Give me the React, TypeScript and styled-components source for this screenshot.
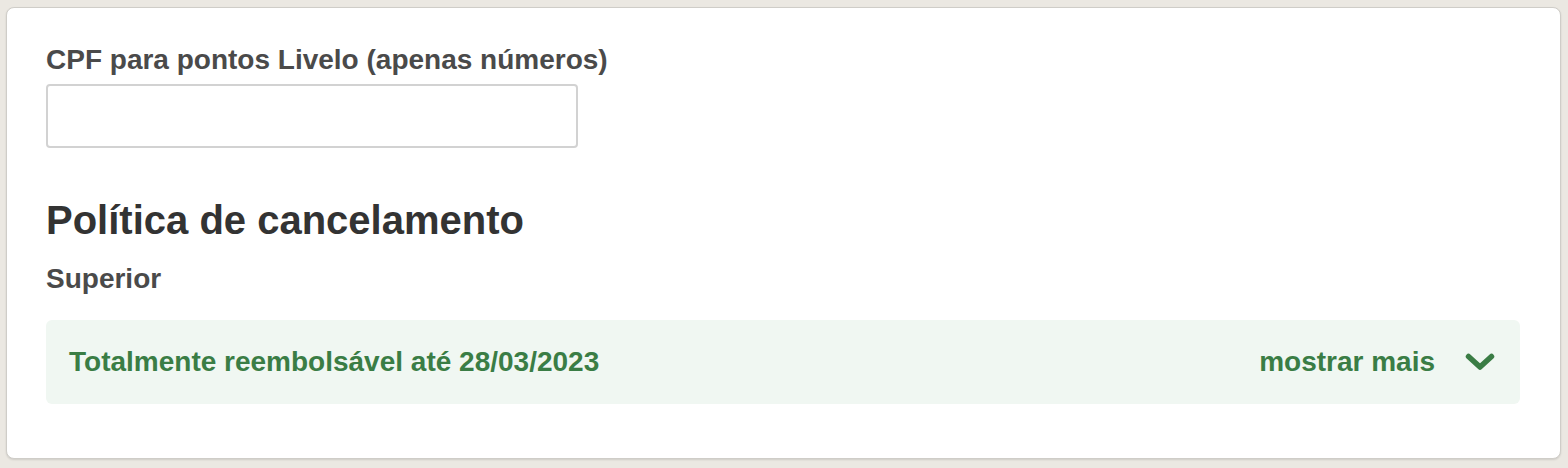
import styled, { createGlobalStyle } from "styled-components";

const GlobalStyle = createGlobalStyle`
  html, body {
    margin: 0;
    padding: 0;
    background: #ebe8e2;
    font-family: "Liberation Sans", Arial, Helvetica, sans-serif;
  }
  #root {
    padding: 7px 7px 9px 6px;
  }
`;

const Card = styled.section`
  background: #fff;
  border: 1px solid #cfcdc8;
  border-radius: 8px;
  box-shadow: 0 1px 2px rgba(0, 0, 0, 0.12);
  padding: 36px 40px 54px 39px;
`;

const Label = styled.label`
  display: block;
  font-size: 28px;
  font-weight: 700;
  color: #4a4a4a;
  line-height: 32px;
  margin-bottom: 8px;
`;

const TextInput = styled.input`
  display: block;
  box-sizing: border-box;
  width: 532px;
  height: 64px;
  border: 2px solid #d2d2d2;
  border-radius: 4px;
  background: #fff;
  font-size: 24px;
  padding: 0 14px;
  outline: none;
`;

const Heading = styled.h2`
  margin: 48px 0 0;
  font-size: 40px;
  line-height: 48px;
  font-weight: 700;
  color: #333;
`;

const SubHeading = styled.h3`
  margin: 19px 0 0;
  font-size: 28px;
  line-height: 32px;
  font-weight: 700;
  color: #4a4a4a;
`;

const PolicyBox = styled.div`
  margin-top: 25px;
  height: 84px;
  box-sizing: border-box;
  display: flex;
  align-items: center;
  justify-content: space-between;
  padding: 0 25px 0 23px;
  background: #f0f7f2;
  border-radius: 6px;
  color: #3a7d45;
  font-size: 28px;
  font-weight: 700;
`;

const Toggle = styled.button`
  display: flex;
  align-items: center;
  gap: 30px;
  border: none;
  background: transparent;
  color: inherit;
  font: inherit;
  padding: 0;
  cursor: pointer;
`;

function Chevron() {
  return (
    <svg width="30" height="18" viewBox="0 0 30 18">
      <polyline
        points="3.5,3.5 15,14 26.5,3.5"
        fill="none"
        stroke="currentColor"
        strokeWidth="5.5"
        strokeLinecap="round"
        strokeLinejoin="round"
      />
    </svg>
  );
}

export default function App() {
  return (
    <>
      <GlobalStyle />
      <Card>
        <Label htmlFor="cpf">CPF para pontos Livelo (apenas números)</Label>
        <TextInput id="cpf" type="text" inputMode="numeric" />
        <Heading>Política de cancelamento</Heading>
        <SubHeading>Superior</SubHeading>
        <PolicyBox>
          <span>Totalmente reembolsável até 28/03/2023</span>
          <Toggle>
            mostrar mais
            <Chevron />
          </Toggle>
        </PolicyBox>
      </Card>
    </>
  );
}
